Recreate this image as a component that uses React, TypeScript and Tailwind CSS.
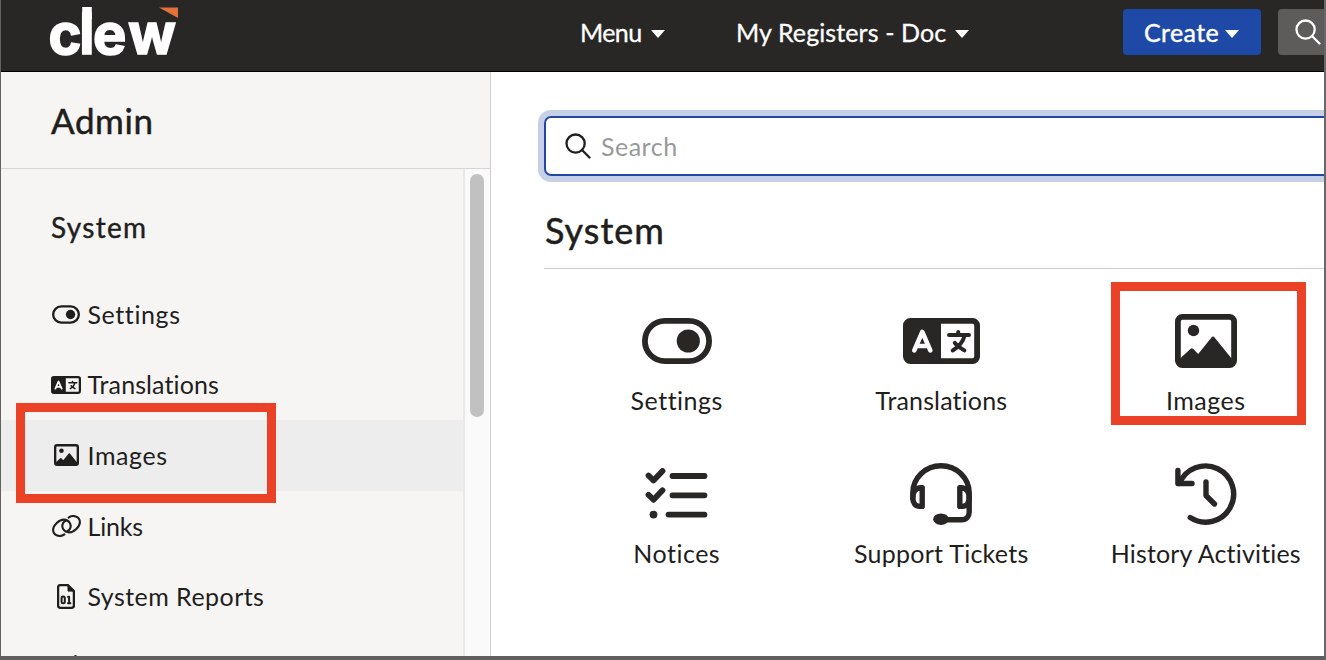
import React from "react";

type IconProps = { className?: string };

function ToggleIcon({ className }: IconProps) {
  return (
    <svg viewBox="0 0 70 46" className={className} fill="none" stroke="currentColor">
      <rect x="2.9" y="2.9" width="64.2" height="40.2" rx="20.1" strokeWidth="5.8" />
      <circle cx="46.3" cy="23" r="11.6" fill="currentColor" stroke="none" />
    </svg>
  );
}

function LanguageIcon({ className }: IconProps) {
  return (
    <svg viewBox="0 0 77 46" className={className} fill="none" strokeLinecap="round" strokeLinejoin="round">
      <rect x="2.9" y="2.9" width="71.2" height="40.2" rx="4.5" stroke="currentColor" strokeWidth="5.8" />
      <path d="M3 3h35v40H3z" fill="currentColor" />
      <path d="M11.3 32.4l8-18.4 8 18.4M14 28h10.6" stroke="white" strokeWidth="4.6" />
      <path d="M46 17h20M55.2 14v3M61.7 17.5c-1.8 6.5-6 11.5-12 15M51.8 24.8c2.3 3.2 6 5.3 9.6 7.6" stroke="currentColor" strokeWidth="4" />
    </svg>
  );
}

function ImageIcon({ className }: IconProps) {
  return (
    <svg viewBox="0 0 62 54" className={className} fill="none" stroke="currentColor" strokeLinejoin="round">
      <rect x="2.9" y="2.9" width="56.2" height="48.2" rx="4.5" strokeWidth="5.8" />
      <circle cx="18.5" cy="16.5" r="5.7" fill="currentColor" stroke="none" />
      <path d="M5 47l11.8-11 6.5 6.5L38 24.2 56.5 47v3H5z" fill="currentColor" strokeWidth="3.4" />
    </svg>
  );
}

function ChecklistIcon({ className }: IconProps) {
  return (
    <svg viewBox="0 0 64 52" className={className} fill="none" stroke="currentColor" strokeWidth="5.8" strokeLinecap="round" strokeLinejoin="round">
      <path d="M3.5 7.5l5 5 9-9.5M3.5 26.8l5 5 9-9.5" />
      <path d="M27.5 8h32M27.5 27.3h32M23.5 46.6h36" />
      <circle cx="8.5" cy="46.6" r="3.9" fill="currentColor" stroke="none" />
    </svg>
  );
}

function HeadsetIcon({ className }: IconProps) {
  return (
    <svg viewBox="0 0 62 62" className={className} fill="none" stroke="currentColor" strokeWidth="5.4" strokeLinecap="round" strokeLinejoin="round">
      <path d="M2.8 35v-5a28.2 27.2 0 0 1 56.4 0v19c0 4.5-3 7.7-7.3 7.7H37" />
      <path d="M2.8 35c0-6 3.2-10.2 8-10.2h1.4v18.6h-2.4c-4.4 0-7-3.3-7-8.4z" />
      <path d="M59.2 35c0-6-3.2-10.2-8-10.2h-1.4v18.6h2.4c4.4 0 7-3.3 7-8.4z" />
      <ellipse cx="31" cy="56.2" rx="7.8" ry="5.8" fill="currentColor" stroke="none" />
    </svg>
  );
}

function HistoryIcon({ className }: IconProps) {
  return (
    <svg viewBox="0 0 62 62" className={className} fill="none" stroke="currentColor" strokeWidth="5.4" strokeLinecap="round" strokeLinejoin="round">
      <path d="M2.9 7.5v13H17" />
      <path d="M4.5 20.5A28.1 28.1 0 1 1 15.2 54.6" />
      <path d="M4 14v6h5z" fill="currentColor" stroke="none" />
      <path d="M31 19v13.5l8.5 8.5" />
    </svg>
  );
}

function LinkIcon({ className }: IconProps) {
  return (
    <svg viewBox="0 0 29 22" className={className} fill="none" stroke="currentColor" strokeWidth="2.1" strokeLinecap="round" strokeLinejoin="round">
      <path d="M12.4 19.4C8.4 22.4 1.1 21 1.1 14.8 1.1 10.4 7.2 4.6 11.8 4.6c5.4 0 8.2 5.2 6.2 9.2-.6 1.2-1.6 1.9-2.6 2.2" />
      <path d="M16.6 2.6C20.6-.4 27.9 1 27.9 7.2c0 4.4-6.1 10.2-10.7 10.2-5.4 0-8.2-5.2-6.2-9.2.6-1.2 1.6-1.9 2.6-2.2" />
    </svg>
  );
}

function ReportIcon({ className }: IconProps) {
  return (
    <svg viewBox="0 0 18 25" className={className} fill="none" stroke="currentColor" strokeLinejoin="round">
      <path d="M3.4 1.1h7.5l6 6v14.4a2.3 2.3 0 0 1-2.3 2.3H3.4a2.3 2.3 0 0 1-2.3-2.3V3.4a2.3 2.3 0 0 1 2.3-2.3z" strokeWidth="2.3" />
      <path d="M11 1.5v5.6h5.6z" fill="currentColor" />
      <rect x="4.6" y="12.6" width="3.2" height="6.6" rx="1.5" strokeWidth="2" />
      <path d="M10.3 13.2l1.8-.5V19M10.2 19.3h4" strokeWidth="2" />
    </svg>
  );
}

function SearchIcon({ className }: IconProps) {
  return (
    <svg viewBox="0 0 26 26" className={className} fill="none" stroke="currentColor" strokeWidth="2.3">
      <circle cx="10.6" cy="10.6" r="9.1" />
      <path d="M17 17l7.5 7.5" strokeLinecap="round" />
    </svg>
  );
}

function Caret({ className }: IconProps) {
  return (
    <svg viewBox="0 0 14 8" className={className} fill="currentColor">
      <path d="M0 0h14L7 8z" />
    </svg>
  );
}

const sidebarItems = [
  { label: "Settings", icon: <ToggleIcon className="w-[28px] h-[19px]" />, text: "tracking-[0.6px]" },
  { label: "Translations", icon: <LanguageIcon className="w-[30px] h-[18px]" />, text: "tracking-[0.1px]" },
  { label: "Images", icon: <ImageIcon className="w-[25px] h-[22px]" />, text: "tracking-[0.6px]", active: true },
  { label: "Links", icon: <LinkIcon className="w-[29px] h-[22px]" />, text: "tracking-[-0.2px]" },
  { label: "System Reports", icon: <ReportIcon className="w-[18px] h-[25px]" />, text: "tracking-[0.45px]" },
];

const tiles = [
  { label: "Settings", icon: <ToggleIcon className="w-[70px] h-[46px]" />, text: "tracking-[0.5px]" },
  { label: "Translations", icon: <LanguageIcon className="w-[77px] h-[46px]" />, text: "tracking-[0.15px]" },
  { label: "Images", icon: <ImageIcon className="w-[62px] h-[54px]" />, text: "tracking-[0.5px]", marked: true },
  { label: "Notices", icon: <ChecklistIcon className="w-[64px] h-[52px]" />, text: "tracking-[0.5px]" },
  { label: "Support Tickets", icon: <HeadsetIcon className="w-[62px] h-[62px]" />, text: "tracking-[0.25px]" },
  { label: "History Activities", icon: <HistoryIcon className="w-[62px] h-[62px]" />, text: "tracking-[0.17px]" },
];

export default function App() {
  return (
    <div className="w-[1326px] h-[660px] overflow-hidden flex flex-col bg-white text-[#1f1e1c] font-['Lato',sans-serif] text-[25px] leading-[30px] whitespace-nowrap border-l border-l-[#626262] border-r-2 border-r-[#686869] border-b-4 border-b-[#5f5f5f]">
      {/* Top bar */}
      <header className="h-[72px] shrink-0 bg-[#282725] border-b border-black text-white flex items-start">
        <svg viewBox="0 0 130 71" className="w-[130px] h-[71px] ml-12 shrink-0 overflow-visible">
          <text
            x="-0.4 30.2 44 79.3"
            y="54.3"
            fontSize="56"
            className="font-['Inter',sans-serif] font-bold"
            fill="white"
            stroke="white"
            strokeWidth="1.6"
          >
            clew
          </text>
          {/* taller stem on the l */}
          <rect x="33.2" y="7" width="9.6" height="12" fill="white" />
          <path d="M110 7.5h19v10.5z" fill="#e2703a" />
        </svg>
        <div className="ml-[401px] w-[156px] mt-[17px] flex items-center shrink-0 [-webkit-text-stroke:0.3px]">
          <span className="w-[71px] tracking-[-0.6px]">Menu</span>
          <Caret className="w-[14px] h-2 mt-[4px]" />
        </div>
        <div className="w-[387px] mt-[17px] flex items-center shrink-0 [-webkit-text-stroke:0.3px]">
          <span className="w-[219px] tracking-[0.1px]">My Registers - Doc</span>
          <Caret className="w-[14px] h-2 mt-[4px]" />
        </div>
        <button className="w-[138px] h-[46px] mt-[9px] rounded-[4px] bg-[#1f49a6] flex items-center pl-[21px] shrink-0 [-webkit-text-stroke:0.4px]">
          <span className="w-[81px] text-left tracking-[0.4px]">Create</span>
          <Caret className="w-[14px] h-2 mt-[4px]" />
        </button>
        <div className="ml-[17px] w-[60px] h-[46px] mt-[9px] rounded-[4px] bg-[#5d5c5a] shrink-0 pl-[17px] pt-[10px]">
          <SearchIcon className="w-[26px] h-[26px]" />
        </div>
      </header>

      <div className="flex flex-1 min-h-0">
        {/* Sidebar */}
        <aside className="w-[490px] shrink-0 bg-[#f6f5f4] border-r border-[#cfcfcf] flex flex-col">
          <div className="h-[97px] shrink-0 border-b border-[#d6d6d6] pl-[50px] pt-[28px]">
            <h1 className="text-[35px] leading-[40px] tracking-[0.6px] [-webkit-text-stroke:0.5px]">Admin</h1>
          </div>
          <div className="flex flex-1 min-h-0">
            <nav className="flex-1 overflow-hidden">
              <h2 className="pl-[50px] pt-[41px] h-[110px] text-[28px] leading-[34px] tracking-[1.3px] [-webkit-text-stroke:0.4px]">
                System
              </h2>
              {sidebarItems.map((item) => (
                <div
                  key={item.label}
                  className={`relative h-[70.6px] flex items-center pl-[50px] ${item.active ? "bg-[#ededed]" : ""}`}
                >
                  <span className="w-[30px] mr-[6.5px] flex justify-center">{item.icon}</span>
                  <span className={`pb-px ${item.text}`}>{item.label}</span>
                  {item.active && (
                    <span className="absolute left-[15px] top-[-17px] w-[260px] h-[100px] border-[9px] border-[#eb4127]" />
                  )}
                </div>
              ))}
              <div className="ml-[73px] mt-[23px] w-[3px] h-3 rounded-full bg-[#282725]" />
            </nav>
            <div className="w-[27px] shrink-0 bg-[#fafafa] border-l-2 border-[#e8e8e8] pl-[5px] pt-[5px]">
              <div className="w-[14px] h-[243px] rounded-full bg-[#c1c1c1]" />
            </div>
          </div>
        </aside>

        {/* Content */}
        <main className="flex-1 min-w-0 overflow-hidden">
          <div className="ml-[53px] mt-[44px] w-[840px] h-[60px] rounded-[7px] border-2 border-[#2346a0] ring-[6px] ring-[#c6d1e8] flex items-center pl-[19px] pb-px">
            <SearchIcon className="w-[26px] h-[26px]" />
            <span className="ml-[10px] text-[#999] tracking-[0.5px]">Search</span>
          </div>
          <h2 className="ml-[53px] mt-[32px] h-[61px] border-b border-[#cfcfcf] pl-px pt-[2px] text-[36px] leading-[40px] tracking-[1px] [-webkit-text-stroke:0.5px]">
            System
          </h2>
          <div className="ml-[53.5px] grid grid-cols-[264.5px_264.5px_264.5px] auto-rows-[153px]">
            {tiles.map((tile) => (
              <div key={tile.label} className="relative flex flex-col items-center pt-[40px]">
                <div className="h-[64px] flex items-center text-[#282725]">{tile.icon}</div>
                <span className={`mt-[12px] ${tile.text}`}>{tile.label}</span>
                {tile.marked && (
                  <span className="absolute left-[37.5px] top-[13px] w-[195px] h-[143px] border-[9px] border-[#eb4127]" />
                )}
              </div>
            ))}
          </div>
        </main>
      </div>
    </div>
  );
}
